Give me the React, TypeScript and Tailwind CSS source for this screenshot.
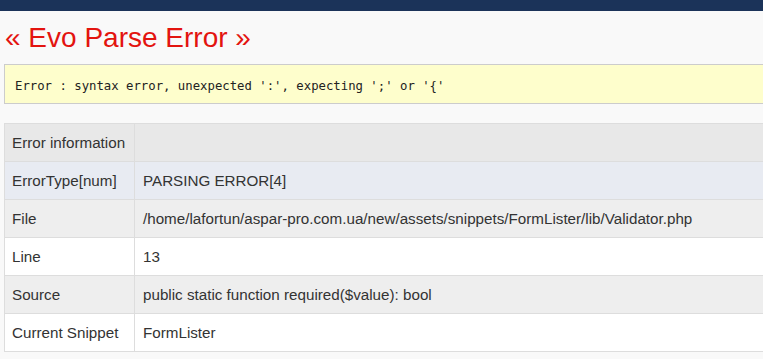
import React from "react";

const rows: { label: string; value: string; bg: string }[] = [
  { label: "Error information", value: "", bg: "bg-[#e8e8e8]" },
  { label: "ErrorType[num]", value: "PARSING ERROR[4]", bg: "bg-[#e8ebf2]" },
  { label: "File", value: "/home/lafortun/aspar-pro.com.ua/new/assets/snippets/FormLister/lib/Validator.php", bg: "bg-[#eeeeee]" },
  { label: "Line", value: "13", bg: "bg-white" },
  { label: "Source", value: "public static function required($value): bool", bg: "bg-[#eeeeee]" },
  { label: "Current Snippet", value: "FormLister", bg: "bg-white" },
];

const errorText = "Error : syntax error, unexpected ':', expecting ';' or '{'";

export default function App() {
  return (
    <div className="w-[763px] h-[359px] overflow-hidden bg-[#f9f9f9] font-['Liberation_Sans',Arial,sans-serif]">
      <div className="h-[11px] bg-[#1b3359]" />
      <div className="pl-[4px]">
        <h1 className="mt-[11px] mb-[10px] pl-[1px] text-[28px] leading-[32px] text-[#e3140f] font-normal">
          « Evo Parse Error »
        </h1>
        <div className="w-[800px] h-[40px] flex items-center border border-[#cccccc] bg-[#fefecc] pl-[10px] pt-[4px] font-['DejaVu_Sans_Mono',monospace] text-[12.3px] text-[#222]">
          {errorText}
        </div>
        <table className="mt-[19px] w-[800px] border-collapse text-[15.2px] text-[#333]">
          <tbody>
            {rows.map((r) => (
              <tr key={r.label} className={`${r.bg} h-[38px]`}>
                <td className="w-[130px] border border-[#dddddd] pl-[7px] pt-[1px] align-middle whitespace-nowrap">{r.label}</td>
                <td className="border border-[#dddddd] pl-[8px] pt-[1px] align-middle whitespace-nowrap">{r.value}</td>
              </tr>
            ))}
          </tbody>
        </table>
      </div>
    </div>
  );
}
